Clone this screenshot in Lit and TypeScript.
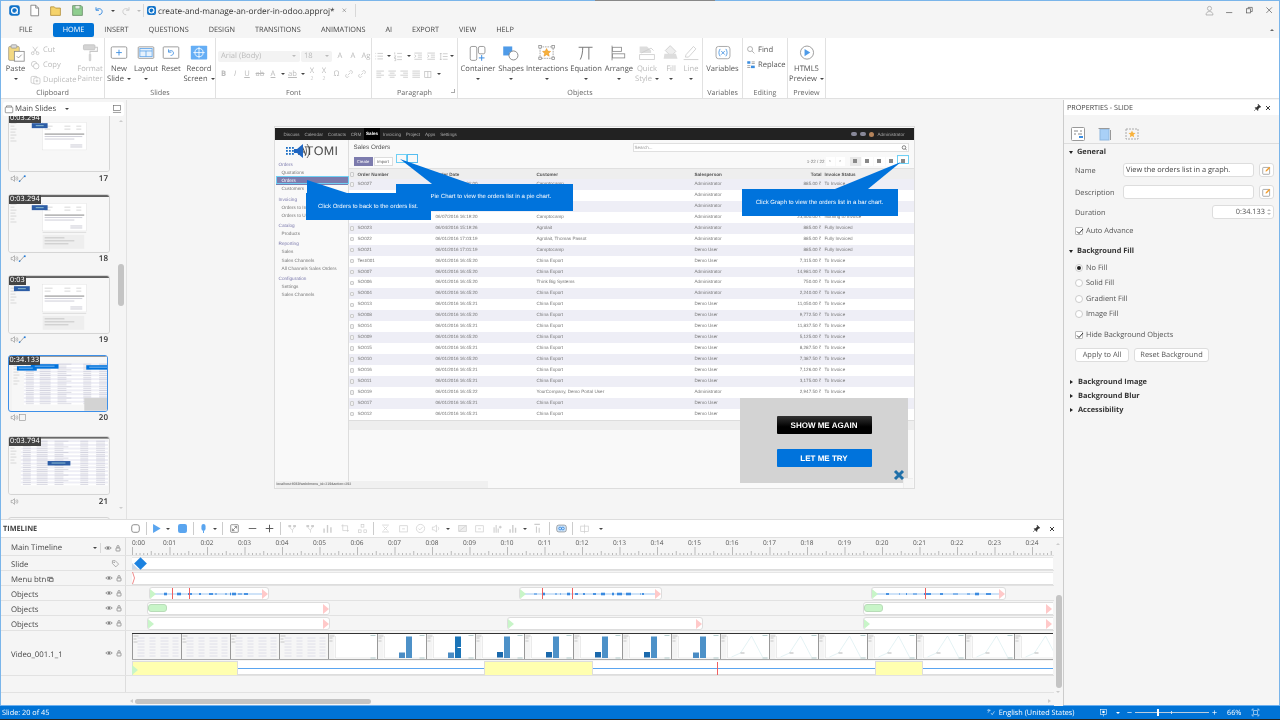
import { LitElement, html, css, svg } from 'lit';
import { customElement } from 'lit/decorators.js';

const S = (p: any, w = 16, h = w, vb = '0 0 16 16') => html`<svg width=${w} height=${h} viewBox=${vb} fill="none" style="display:block;flex:none">${p}</svg>`;

const ic: Record<string, any> = {
  app: svg`<rect x="1.5" y="1.5" width="13" height="13" rx="3" fill="#1273c9"/><circle cx="8" cy="8" r="3.6" stroke="#fff" stroke-width="1.6"/><path d="M9.5 9.5l2.4 2.4" stroke="#fff" stroke-width="1.4"/>`,
  doc: svg`<path d="M3.5 1.5h6l3.500 3.500v9.500h-9.500z" fill="#fff" stroke="#777"/><path d="M9.500 1.500v3.500h3.500" stroke="#777"/>`,
  folder: svg`<path d="M2 3.500h4.500l1.500 1.500h6v9h-12z" fill="#f5d36b" stroke="#b28f3a"/>`,
  save: svg`<path d="M2 2h10.500l1.500 1.500v10.500h-12z" fill="#8fce8f" stroke="#6a8f6a"/><rect x="5" y="2" width="6" height="4" fill="#dfe9df" stroke="#6a8f6a" stroke-width=".6"/>`,
  undo: svg`<path d="M4 3v4h4" stroke="#3b8de0" stroke-width="1.300"/><path d="M4.200 6.800c2-3 8-2.500 8 2 0 2.500-2 4.200-4.500 4.200" stroke="#3b8de0" stroke-width="1.300"/>`,
  redo: svg`<path d="M12 3v4h-4" stroke="#ccc" stroke-width="1.300"/><path d="M11.800 6.800c-2-3-8-2.500-8 2 0 2.500 2 4.200 4.500 4.200" stroke="#ccc" stroke-width="1.300"/>`,
  user: svg`<circle cx="8" cy="5" r="3" stroke="#aaa" stroke-width="1.200"/><path d="M3 14.500c0-3.500 2-5 5-5s5 1.500 5 5z" stroke="#aaa" stroke-width="1.200"/>`,
  min: svg`<path d="M3 11h9" stroke="#555" stroke-width="1"/>`,
  rest: svg`<rect x="3.500" y="5.500" width="6" height="6" stroke="#555"/><path d="M6 5V3.500h6v6h-2" stroke="#555"/>`,
  close: svg`<path d="M3.500 3.500l8 8m0-8l-8 8" stroke="#555" stroke-width="1"/>`,
  paste: svg`<rect x="2" y="3" width="13" height="17" rx="1.500" fill="#f3d982" stroke="#a9a08a"/><rect x="5" y="1" width="7" height="4" rx="1" fill="#ddd" stroke="#999"/><rect x="9" y="9" width="12" height="12" fill="#fff" stroke="#888"/><path d="M12 15l2 2 4-4" stroke="#888"/>`,
  cut: svg`<circle cx="4" cy="12" r="2" stroke="#bbb"/><circle cx="11" cy="12" r="2" stroke="#bbb"/><path d="M5 10.500l6-8M10 10.500l-6-8" stroke="#bbb"/>`,
  copy: svg`<circle cx="6" cy="6" r="4" stroke="#bbb"/><circle cx="9" cy="9" r="4" fill="#fff" stroke="#bbb"/>`,
  dup: svg`<rect x="1.500" y="3.500" width="9" height="10" rx="2" stroke="#bbb"/><rect x="5.500" y="5.500" width="9" height="9" rx="2" fill="#fff" stroke="#bbb"/><path d="M10 8v4M8 10h4" stroke="#bbb"/>`,
  roller: svg`<rect x="3" y="1" width="14" height="6" rx="1" fill="#d4d4d4" stroke="#c2c2c2"/><path d="M17 4h3v5h-9v3" stroke="#c8c8c8" stroke-width="1.300"/><rect x="9.500" y="12" width="3" height="9" rx="1" fill="#d4d4d4"/>`,
  newslide: svg`<rect x="1.500" y="3.500" width="19" height="14" rx="1.500" stroke="#8a8a8a"/><path d="M11 7v7M7.500 10.500h7" stroke="#3b8de0" stroke-width="1.100"/>`,
  layout: svg`<rect x="1.500" y="3.500" width="19" height="14" rx="1" stroke="#8a8a8a" fill="#fff"/><rect x="3.500" y="5.500" width="15" height="10" fill="#e6f1fc" stroke="#5ba2e8"/><path d="M3.500 8.500h15M11 8.500v7" stroke="#5ba2e8"/>`,
  reset: svg`<rect x="1.500" y="3.500" width="19" height="14" rx="1" stroke="#8a8a8a"/><path d="M8 6.500v3.500h3.500" stroke="#3b8de0"/><path d="M8 9.500c2-2.500 6-1.500 6 1.500 0 2-1.500 3-3.500 3" stroke="#3b8de0"/>`,
  record: svg`<rect x="1" y="2" width="20" height="17" rx="1" fill="#65aef5"/><circle cx="11" cy="10.500" r="5" stroke="#fff"/><path d="M11 3.500v14M4 10.500h14" stroke="#fff"/>`,
  container: svg`<rect x="1.500" y="3" width="8" height="17" rx="2" stroke="#888"/><rect x="11.500" y="3" width="8" height="9" rx="2" stroke="#888"/><path d="M15.500 13.500v7M12 17h7" stroke="#3b8de0" stroke-width="1.200"/>`,
  shapes: svg`<rect x="1.500" y="3" width="11" height="11" fill="#4f9be8"/><circle cx="14" cy="14" r="5.500" fill="#fff" stroke="#777"/>`,
  inter: svg`<rect x="2.500" y="3.500" width="16" height="14" stroke="#999" stroke-dasharray="2 1"/><rect x="1" y="2" width="3" height="3" fill="#fff" stroke="#777" stroke-width=".8"/><rect x="17" y="2" width="3" height="3" fill="#fff" stroke="#777" stroke-width=".8"/><rect x="1" y="16" width="3" height="3" fill="#fff" stroke="#777" stroke-width=".8"/><rect x="17" y="16" width="3" height="3" fill="#fff" stroke="#777" stroke-width=".8"/><path d="M10.500 5.500l1.500 3.200 3.500.4-2.600 2.300.8 3.500-3.200-1.800-3.200 1.800.8-3.500-2.600-2.300 3.500-.4z" fill="#f8b23c" stroke="#e38e1e" stroke-width=".6"/>`,
  equation: svg`<path d="M2 4h17M7 4c0 6-1 11-3 15M14.500 4v15" stroke="#777" stroke-width="1.200"/>`,
  arrange: svg`<path d="M2.500 2v18" stroke="#888"/><rect x="3" y="4" width="11" height="5" stroke="#888"/><rect x="3" y="12" width="15" height="5" stroke="#888"/>`,
  quick: svg`<path d="M2 3h9l5 5v3H2z" fill="#ddd"/><path d="M4 11l12-6 3 3" stroke="#ccc"/><rect x="2" y="13" width="18" height="6" fill="#fff" stroke="#ccc"/>`,
  fill: svg`<path d="M10 2l7 7-6 6-7-7z" stroke="#ccc" fill="#eee"/><path d="M3 12h14l2 6H2z" fill="#ddd"/>`,
  line: svg`<path d="M5 13L14 3l3 3-9 10H4z" stroke="#ccc"/><path d="M2 19h18" stroke="#ccc"/>`,
  vars: svg`<rect x="2.500" y="3" width="17" height="15" rx="3" stroke="#999"/><path d="M7.500 6c-2 3-2 6 0 9M14.500 6c2 3 2 6 0 9M8.800 8.500l4.400 4.500m0-4.500L8.800 13" stroke="#3b8de0"/>`,
  find: svg`<circle cx="6.500" cy="6.500" r="4" stroke="#888"/><path d="M9.500 9.500l4 4" stroke="#888"/>`,
  replace: svg`<rect x="2" y="2" width="5" height="4" fill="#3b8de0"/><rect x="8" y="9" width="6" height="4" fill="#3b8de0"/><path d="M2 9h5M2 12h5M9 3h5M9 5.500h5" stroke="#777"/>`,
  preview: svg`<circle cx="11" cy="10.500" r="8" stroke="#8a8a8a"/><path d="M8 6l7 4.500L8 15z" fill="#4f9be8"/>`,
  bullets: svg`<path d="M2 3.500h1M2 7.500h1M2 11.500h1M5 3.500h8M5 7.500h8M5 11.500h8" stroke="#bbb"/>`,
  numbers: svg`<path d="M2.500 2v3M2 7h2l-2 3h2M2 11h2v3H2M6 3.500h7M6 8.500h7M6 12.500h7" stroke="#bbb"/>`,
  indent: svg`<path d="M2 3h11M7 6h6M7 9h6M2 12h11M2 5.500l2.500 2-2.500 2" stroke="#bbb"/>`,
  spacing: svg`<path d="M4 3v10M2.500 4.500L4 3l1.500 1.500M2.500 11.500L4 13l1.500-1.500M7 4h7M7 8h7M7 12h7" stroke="#bbb"/>`,
  left: svg`<path d="M2 3h11M2 6h7M2 9h11M2 12h7" stroke="#bbb"/>`,
  center: svg`<path d="M2 3h11M4 6h7M2 9h11M4 12h7" stroke="#bbb"/>`,
  right: svg`<path d="M2 3h11M6 6h7M2 9h11M6 12h7" stroke="#bbb"/>`,
  just: svg`<path d="M2 3h11M2 6h11M2 9h11M2 12h11" stroke="#bbb"/>`,
  cols: svg`<rect x="2.500" y="3.500" width="9" height="9" stroke="#bbb"/><path d="M7 3.500v9" stroke="#bbb"/>`,
  link: svg`<path d="M6 10l4-4M4.500 8L3 9.500a2.500 2.500 0 003.500 3.500L8 11.500M8 4.500L9.500 3A2.500 2.500 0 0113 6.500L11.500 8" stroke="#bbb"/>`,
  pin: svg`<path d="M9 2l5 5-2 .5-3 3-.5 3-5-5 3-.5 3-3zM5 11l-3 3" stroke="#333" fill="#333"/>`,
  x: svg`<path d="M4 4l8 8m0-8l-8 8" stroke="#222" stroke-width="1.800"/>`,
  eye: svg`<path d="M1.500 8C3.500 4.500 12.500 4.500 14.500 8 12.500 11.500 3.500 11.500 1.500 8z" stroke="#666" stroke-width="1.200"/><circle cx="8" cy="8" r="2" fill="#666"/>`,
  lock: svg`<rect x="4" y="8" width="8" height="6" rx="1" stroke="#666" stroke-width="1.200"/><path d="M6 8V5a2 2 0 014 0v3" stroke="#666" stroke-width="1.200"/>`,
  tag: svg`<path d="M2.500 3h5l6 6-5 5-6-6z" stroke="#777"/><circle cx="5.500" cy="6" r="1" fill="#777"/>`,
  speaker: svg`<path d="M2 6h2.500L8 3v10L4.500 10H2z" stroke="#888"/><path d="M10 5.500c1.500 1 1.500 4 0 5M12 4c2.500 2 2.500 6 0 8" stroke="#888"/>`,
  motion: svg`<path d="M3 13L11 4" stroke="#666"/><rect x="1.500" y="11.500" width="2.500" height="2.500" fill="#1c78d8"/><rect x="10.500" y="2.500" width="3" height="3" fill="#1c78d8"/>`,
  sq: svg`<rect x="3" y="3" width="10" height="10" stroke="#888"/>`,
  panel: svg`<rect x="2.500" y="2.500" width="11" height="8" stroke="#666"/><path d="M1.500 13.500h13" stroke="#666"/>`,
  stack: svg`<rect x="2" y="5" width="12" height="9" rx="1" stroke="#666"/><path d="M4 5V3h8v2" stroke="#666"/>`,
  pgen: svg`<rect x="1.500" y="1.500" width="13" height="13" rx="1" fill="#fff" stroke="#999"/><path d="M4 5h4M10 5h2M4 8h2M8 8h4" stroke="#888"/><path d="M9 11h4" stroke="#3b8de0" stroke-width="2"/>`,
  pvid: svg`<rect x="3" y="3" width="9" height="11" fill="#a9d0f7" stroke="#8fb8e0"/><path d="M1.500 2.500h11M13.500 4v10" stroke="#999"/>`,
  pstar: svg`<rect x="2" y="3" width="12" height="10" stroke="#aaa" stroke-dasharray="2 1"/><path d="M8 4.500l1 2.300 2.500.3-1.900 1.700.6 2.500L8 10l-2.200 1.300.6-2.500L4.500 7.100 7 6.800z" fill="#f8b23c"/>`,
  edit: svg`<rect x="2.500" y="3.500" width="10" height="10" rx="1" stroke="#888"/><path d="M6.500 9.500l.5-2 5-5 1.500 1.500-5 5z" fill="#f39c28"/>`,
  tbRect: svg`<rect x="2.500" y="2.500" width="11" height="11" rx="3" stroke="#777" stroke-width="1.200"/>`,
  tbPlay: svg`<path d="M3 1.500l11 6.500-11 6.500z" fill="#5aa5ef"/>`,
  tbStop: svg`<rect x="1.500" y="1.500" width="13" height="13" rx="3" fill="#5aa5ef"/>`,
  tbMic: svg`<rect x="5" y="1.500" width="6" height="10" rx="3" fill="#5aa5ef"/><path d="M8 11.500v3" stroke="#5aa5ef" stroke-width="1.500"/>`,
  tbFit: svg`<rect x="2.500" y="2.500" width="11" height="11" rx="1" stroke="#666"/><path d="M5 11l6-6M8 5h3v3M5 8v3h3" stroke="#666"/>`,
  tbMinus: svg`<path d="M2.500 8h11" stroke="#666" stroke-width="1.400"/>`,
  tbPlus: svg`<path d="M2.500 8h11M8 2.500v11" stroke="#555" stroke-width="1.400"/>`,
  f1: svg`<rect x="2" y="3" width="4" height="3" fill="#ccc"/><rect x="9" y="3" width="4" height="3" fill="#ccc"/><path d="M4 6l3 4M11 6l-3 4v4" stroke="#ccc"/>`,
  f2: svg`<path d="M3 14V8M8 14V3M13 14V6" stroke="#ccc" stroke-width="2"/>`,
  f3: svg`<path d="M4 2v9h9M2 4h9v9" stroke="#ccc"/>`,
  f4: svg`<rect x="6" y="2" width="4" height="4" stroke="#ccc"/><rect x="2" y="10" width="4" height="4" stroke="#ccc"/><rect x="10" y="10" width="4" height="4" stroke="#ccc"/>`,
  f5: svg`<path d="M3 3h10M3 13h10M5 5l3 3 3-3M5 11l3-3 3 3" stroke="#ccc"/>`,
  f6: svg`<rect x="2.500" y="4" width="11" height="9" stroke="#ccc"/><path d="M6 8.500h4" stroke="#ccc"/>`,
  f7: svg`<circle cx="8" cy="8" r="6" stroke="#ccc"/><path d="M5 8l2 2 4-4" stroke="#ccc"/>`,
  f8: svg`<path d="M2 6h2.500L8 3v10L4.500 10H2zM10 5.500c1.500 1 1.500 4 0 5" stroke="#ccc"/>`,
  f9: svg`<rect x="2.500" y="3.500" width="11" height="9" fill="#eee" stroke="#ccc"/><path d="M3 12l10-8" stroke="#ccc"/>`,
  f10: svg`<path d="M3 14V6M6 14V3M9 14V8M12 4v4M10 6h4" stroke="#ccc" stroke-width="1.500"/>`,
  f11: svg`<path d="M3 14V9M7 14V3M11 14V7" stroke="#ccc" stroke-width="2"/>`,
  f12: svg`<path d="M2 2h8M5 5v9M9 7v7" stroke="#ccc" stroke-width="1.500"/>`,
  loop: svg`<rect x="1" y="3" width="14" height="10" rx="3" fill="#cfe4f9" stroke="#888"/><circle cx="6" cy="8" r="2" stroke="#1c78d8"/><circle cx="10" cy="8" r="2" stroke="#1c78d8"/>`,
  f13: svg`<rect x="2.500" y="4.500" width="11" height="8" stroke="#ccc"/><path d="M8 2v13" stroke="#ccc"/>`,
  lang: svg`<path d="M2 4h6M5 2v2M3 8c2-1 3-2 4-4M9 9l2 3 4-6" stroke="#fff"/>`,
  board: svg`<rect x="2.500" y="2.500" width="11" height="9" stroke="#fff"/><rect x="6" y="5" width="4" height="4" fill="#fff"/><path d="M8 11.500V15" stroke="#fff"/>`,
  fit: svg`<path d="M2 5V2h3M11 2h3v3M14 11v3h-3M5 14H2v-3M4.500 4.500h7v7h-7z" stroke="#fff"/>`,
  wminus: svg`<path d="M3 8h10" stroke="#fff" stroke-width="1.500"/>`,
  wplus: svg`<path d="M3 8h10M8 3v10" stroke="#fff" stroke-width="1.500"/>`,
};

type Row = [string, string, string, string, string, string];
const ROWS: Row[] = [
  ['SO027', '06/07/2016 16:21:00', 'Camptocamp', 'Administrator', '885.00 ₹', 'To Invoice'],
  ['', '', '', 'Administrator', '', ''],
  ['', '', '', 'Administrator', '', ''],
  ['', '06/07/2016 16:19:20', 'Camptocamp', 'Administrator', '23,500.00 ₹', 'Nothing to Invoice'],
  ['SO023', '06/04/2016 15:19:26', 'Agrolait', 'Administrator', '885.00 ₹', 'Fully Invoiced'],
  ['SO022', '06/01/2016 17:03:19', 'Agrolait, Thomas Passot', 'Administrator', '885.00 ₹', 'Fully Invoiced'],
  ['SO021', '06/01/2016 17:01:19', 'Camptocamp', 'Demo User', '885.00 ₹', 'Fully Invoiced'],
  ['Test/001', '06/01/2016 16:45:20', 'China Export', 'Demo User', '7,315.00 ₹', 'To Invoice'],
  ['SO007', '06/01/2016 16:45:20', 'China Export', 'Administrator', '14,981.00 ₹', 'To Invoice'],
  ['SO006', '06/01/2016 16:45:20', 'Think Big Systems', 'Administrator', '750.00 ₹', 'To Invoice'],
  ['SO004', '06/01/2016 16:45:20', 'China Export', 'Administrator', '2,240.00 ₹', 'To Invoice'],
  ['SO013', '06/01/2016 16:45:21', 'China Export', 'Demo User', '11,050.00 ₹', 'To Invoice'],
  ['SO008', '06/01/2016 16:45:20', 'China Export', 'Demo User', '9,772.50 ₹', 'To Invoice'],
  ['SO014', '06/01/2016 16:45:21', 'China Export', 'Demo User', '11,837.50 ₹', 'To Invoice'],
  ['SO009', '06/01/2016 16:45:20', 'China Export', 'Demo User', '5,125.00 ₹', 'To Invoice'],
  ['SO015', '06/01/2016 16:45:21', 'China Export', 'Demo User', '8,287.50 ₹', 'To Invoice'],
  ['SO010', '06/01/2016 16:45:20', 'China Export', 'Demo User', '7,387.50 ₹', 'To Invoice'],
  ['SO016', '06/01/2016 16:45:21', 'China Export', 'Demo User', '7,126.00 ₹', 'To Invoice'],
  ['SO011', '06/01/2016 16:45:21', 'China Export', 'Demo User', '3,175.00 ₹', 'To Invoice'],
  ['SO019', '06/01/2016 16:45:22', 'YourCompany, Demo Portal User', 'Administrator', '2,947.50 ₹', 'To Invoice'],
  ['SO017', '06/01/2016 16:45:21', 'China Export', 'Demo User', '', ''],
  ['SO012', '06/01/2016 16:45:21', 'China Export', 'Demo User', '', ''],
];
const NAV: [string, number][] = [
  ['Orders', 0], ['Quotations', 1], ['Orders', 2], ['Customers', 1],
  ['Invoicing', 0], ['Orders to Invoice', 1], ['Orders to Upsell', 1],
  ['Catalog', 0], ['Products', 1],
  ['Reporting', 0], ['Sales', 1], ['Sales Channels', 1], ['All Channels Sales Orders', 1],
  ['Configuration', 0], ['Settings', 1], ['Sales Channels', 1],
];

@customElement('odoo-slide')
class OdooSlide extends LitElement {
  static styles = css`
    :host { display: block; width: 639px; height: 361px; position: relative; flex: none; text-rendering: geometricPrecision;
      font-family: "Liberation Sans", Arial, sans-serif; box-shadow: 0 0 0 1px #ddd; background: #f9f9f9; overflow: hidden; }
    .page { height: 100%; display: flex; flex-direction: column; filter: blur(.2px); }
    .top { height: 12px; margin-top: 1px; background: #222; flex: none; display: flex; align-items: center; padding: 0 9px; gap: 4.800px; color: #a8a8a8; font-size: 4.600px; }
    .top .on { color: #fff; font-weight: bold; background: #000; padding: 0 2px; margin: 0 -2px; line-height: 12px; }
    .top .sp { flex: 1; }
    .admin { color: #aaa; display: flex; align-items: center; gap: 3px; }
    .dot { width: 6px; height: 3.500px; border-radius: 2px; background: #889; }
    .face { width: 5px; height: 5px; border-radius: 50%; background: #b5835a; }
    .body { flex: 1; display: flex; min-height: 0; }
    .side { width: 73px; margin-left: 1px; flex: none; border-right: 1px solid #ddd; box-sizing: border-box; background: #f9f9f9; font-size: 4.700px; color: #777; }
    .logo { height: 17px; position: relative; display: flex; justify-content: flex-end; align-items: center; padding-right: 9px; margin-top: 2px; }
    .logo span { font-size: 12.500px; color: #4c4c4c; letter-spacing: .4px; line-height: 18px; }
    .logo svg { position: absolute; left: 9px; top: 0; }
    .sec { color: #7c7bad; height: 8.200px; line-height: 8.200px; margin-top: 1.900px; padding-left: 3px; }
    .it { height: 8.200px; line-height: 8.200px; padding-left: 6px; }
    .it.on { background: #7c7bad; color: #fff; }
    .main { flex: 1; display: flex; flex-direction: column; min-width: 0; }
    .hdr { height: 28px; box-sizing: border-box; flex: none; display: grid; grid-template-columns: 1fr auto; padding: 3px 5px 0 5px; }
    .ttl { font-size: 6.300px; color: #555; line-height: 9px; }
    .search { width: 276px; height: 9px; background: #fff; border: .5px solid #e0e0e0; box-sizing: border-box; font-size: 4.500px; color: #999; line-height: 8px; padding: 0 1px; display: flex; justify-content: space-between; }
    .btns { display: flex; gap: 1px; margin-top: 2px; }
    .b { width: 19px; height: 9px; font-size: 4.200px; text-align: center; line-height: 9px; }
    .b.p { background: #7c7bad; color: #fff; }
    .b.w { background: #fff; border: .5px solid #ddd; color: #666; box-sizing: border-box; line-height: 8px; }
    .pager { display: flex; justify-content: flex-end; align-items: center; gap: 1px; font-size: 4.500px; color: #777; margin-top: 2px; height: 9px; }
    .pg { width: 9px; height: 9px; background: #fff; text-align: center; line-height: 8px; color: #666; }
    .vw { width: 11px; height: 9px; background: #e8e8e8; display: grid; place-items: center; }
    .vw i { width: 4px; height: 3.500px; background: #888; display: block; }
    .vw.w { background: #fff; }
    .tbl { flex: none; font-size: 4.600px; color: #777; }
    .r { display: grid; grid-template-columns: 9px 78px 101px 158px 95px 32px 91px; height: 10.950px; line-height: 10.950px; white-space: nowrap; }
    .r.h { height: 11px; line-height: 11px; background: #eee; font-weight: bold; color: #555; border-top: .5px solid #e0e0e0; box-sizing: border-box; }
    .r.o { background: #eeeef6; }
    .r.e { background: #fff; }
    .r .n { text-align: right; }
    .r .s { padding-left: 3px; }
    .cb { width: 4.500px; height: 4.500px; border: .5px solid #ccc; border-radius: 1px; margin: 3.300px 0 0 1px; background: #f0f0f0; box-sizing: border-box; }
    .foot { height: 10px; background: #eee; border-top: 1px solid #ddd; box-sizing: border-box; flex: none; }
    .url { position: absolute; left: 1px; bottom: 0; width: 212px; height: 7px; background: #f0f0f0; font-size: 3.600px; line-height: 7px; color: #555; padding-left: 1px; box-sizing: border-box; }
    .art { position: absolute; left: 0; top: 0; pointer-events: none; }
    .call { position: absolute; background: #0073dc; color: #fff; font-size: 6px; display: flex; align-items: center; box-sizing: border-box; white-space: nowrap; }
    .c1 { left: 31px; top: 66px; width: 125px; height: 27px; justify-content: center; padding-top: 1px; }
    .c2 { left: 121px; top: 57px; width: 177px; height: 27px; padding-left: 35px; padding-bottom: 2px; }
    .c3 { left: 467px; top: 62px; width: 156px; height: 27px; justify-content: center; padding-top: 1px; }
    .hl { position: absolute; border: 1px solid #6fd0f5; box-sizing: border-box; }
    .h1 { left: 1px; top: 49px; width: 73px; height: 8px; }
    .h2 { left: 121px; top: 27px; width: 11px; height: 9px; }
    .h3 { left: 132px; top: 27px; width: 11px; height: 9px; border-color: #55bdf0; }
    .h4 { left: 622px; top: 28px; width: 12px; height: 9px; }
    .box { position: absolute; left: 465px; top: 271px; width: 168px; height: 85px; background: #d3d3d3; display: flex; flex-direction: column; align-items: center; padding-top: 18px; gap: 15px; box-sizing: border-box; }
    .cta { width: 95px; height: 18px; color: #fff; font-weight: bold; font-size: 8px; display: grid; place-items: center; border-radius: 1px; margin-left: 1px; }
    .cta.k { background: linear-gradient(#333, #000 60%); }
    .cta.u { background: #0073dc; }
    .xbtn { position: absolute; left: 618px; top: 342px; }
    .grip { position: absolute; left: 628px; top: 351px; width: 9px; height: 9px; border-top: 1px solid #eee; border-left: 1px solid #eee; background: #f6f6f6; }
  `;
  render() {
    return html`
      <div class="page">
        <div class="top">
          ${['Discuss', 'Calendar', 'Contacts', 'CRM'].map((t) => html`<span>${t}</span>`)}
          <span class="on">Sales</span>
          ${['Invoicing', 'Project', 'Apps', 'Settings'].map((t) => html`<span>${t}</span>`)}
          <span class="sp"></span>
          <span class="admin"><i class="dot"></i><i class="dot"></i><i class="face"></i>Administrator</span>
        </div>
        <div class="body">
          <div class="side">
            <div class="logo">
              <span>ATOMI</span>
              ${S(svg`
                ${[0, 3, 6].map((a) => [0, 3, 6].map((b) => svg`<rect x=${a + 1} y=${b + 5} width="1.800" height="1.800" fill="#1d6fc4"/>`))}
                <path d="M9 7h3l6-5v14l-6-5H9z" fill="#1f66c2"/>
                <path d="M20 4c2 2.500 2 7.500 0 10M22 2c3 4 3 10 0 14" stroke="#444" stroke-width=".8"/>
              `, 26, 18, '0 0 26 18')}
            </div>
            ${NAV.map(([t, k]) => k === 0 ? html`<div class="sec">${t}</div>` : html`<div class="it ${k === 2 ? 'on' : ''}">${t}</div>`)}
          </div>
          <div class="main">
            <div class="hdr">
              <div class="ttl">Sales Orders</div>
              <div class="search"><span>Search...</span>${S(svg`<circle cx="3" cy="3" r="1.800" stroke="#555" stroke-width=".7"/><path d="M4.300 4.300l1.500 1.500" stroke="#555" stroke-width=".7"/>`, 6, 7, '0 0 6 6')}</div>
              <div class="btns"><div class="b p">Create</div><div class="b w">Import</div></div>
              <div class="pager"><span>1-22 / 22</span><div class="pg">‹</div><div class="pg">›</div><span style="width:3px"></span>
                ${[0, 1, 2, 3, 4].map((i) => html`<div class="vw ${i ? 'w' : ''}"><i></i></div>`)}</div>
            </div>
            <div class="tbl">
              <div class="r h"><div class="cb"></div><div>Order Number</div><div>Order Date</div><div>Customer</div><div>Salesperson</div><div class="n">Total</div><div class="s">Invoice Status</div></div>
              ${ROWS.map((r, i) => html`<div class="r ${i % 2 ? 'e' : 'o'}"><div class="cb"></div><div>${r[0]}</div><div>${r[1]}</div><div>${r[2]}</div><div>${r[3]}</div><div class="n">${r[4]}</div><div class="s">${r[5]}</div></div>`)}
            </div>
            <div class="foot"></div>
          </div>
        </div>
      </div>
      <div class="url">localhost:8069/web#menu_id=219&amp;action=292</div>
      <div class="hl h1"></div><div class="hl h2"></div><div class="hl h3"></div><div class="hl h4"></div>
      <div class="art">${S(svg`
        <polygon points="32,53 72,66 32,66" fill="#0073dc"/>
        <polygon points="125,32 157,57 196,57" fill="#0073dc"/>
        <polygon points="626,35 560,62 593,62" fill="#0073dc"/>
      `, 639, 361, '0 0 639 361')}</div>
      <div class="call c2">Pie Chart to view the orders list in a pie chart.</div>
      <div class="call c1">Click Orders to back to the orders list.</div>
      <div class="call c3">Click Graph to view the orders list in a bar chart.</div>
      <div class="box"><div class="cta k">SHOW ME AGAIN</div><div class="cta u">LET ME TRY</div></div>
      <div class="grip"></div>
      <div class="xbtn">${S(svg`<path d="M2 2l8 8m0-8l-8 8" stroke="#1f6fa8" stroke-width="3"/>`, 12, 12, '0 0 12 12')}</div>
    `;
  }
}

function tableRows(x0: number, y0: number, n: number) {
  const out = [];
  for (let i = 0; i < n; i++) {
    const y = y0 + i * 1.900;
    out.push(svg`<rect x=${x0} y=${y} width=${100 - x0} height="1.900" fill=${i % 2 ? '#fff' : '#eeeef6'}/>
      <path d="M${x0 + 2} ${y + 1}h8M${x0 + 16} ${y + 1}h11M${x0 + 34} ${y + 1}h${i % 3 ? 9 : 14}M${x0 + 60} ${y + 1}h8M${x0 + 76} ${y + 1}h9" stroke="#b8b8c8" stroke-width=".5"/>`);
  }
  return out;
}
function docThumb(cx: number, cy: number, extra: boolean) {
  return svg`
    <rect width="101" height="57" fill="#f7f7f7"/>
    <rect width="101" height="1.500" fill="#333"/>
    <path d="M1.500 6h5M1.500 9h6M1.500 12h4M1.500 15h6M1.500 18h5M1.500 21h6M1.500 24h4M1.500 27h6" stroke="#c9c9c9" stroke-width=".7"/>
    <rect x="34" y="8" width="44" height="28" fill="#fff" stroke="#ddd" stroke-width=".4"/>
    <path d="M36 12h8M56 12h6M68 12h5M36 15h6M56 15h6M68 15h5" stroke="#bbb" stroke-width=".6"/>
    <path d="M36 20h40" stroke="#666" stroke-width=".8"/><path d="M36 22.500h38M36 25h30M62 31h12M62 33h12" stroke="#aab" stroke-width=".6"/>
    ${extra ? svg`<rect x="34" y="40" width="42" height="14" fill="#eee"/><path d="M36 43h20M36 46h30M36 49h24" stroke="#aaa" stroke-width=".6"/><path d="M34 37.500h44" stroke="#ccc" stroke-width=".6"/>` : ''}
    <rect x=${cx} y=${cy} width="16" height="5" fill="#2d5da6"/>
    <path d="M${cx + 4} ${cy + 2.500}h8" stroke="#cfe" stroke-width=".6"/>
  `;
}
const THUMBS: any[] = [
  { n: 17, t: '0:03.294', a: docThumb(23, 9, false), i: 'motion' },
  { n: 18, t: '0:03.294', a: docThumb(23, 10, true), i: 'motion' },
  { n: 19, t: '0:03', a: docThumb(5, 10, true), i: 'motion' },
  {
    n: 20, t: '0:34.133', sel: true, i: 'sq',
    a: svg`<rect width="101" height="57" fill="#f7f7f7"/><rect width="101" height="1.200" fill="#333"/>
      <path d="M1.500 5h5M1.500 8h6M1.500 11h4M1.500 14h6M1.500 17h5M1.500 20h6M1.500 23h4M1.500 26h6M1.500 29h4" stroke="#c9c9c9" stroke-width=".7"/>
      ${tableRows(12, 8, 22)}
      <rect x="5" y="11" width="20" height="4.500" fill="#0073dc"/><rect x="19" y="9" width="28" height="4.500" fill="#0073dc"/><rect x="75" y="10" width="24" height="4.500" fill="#0073dc"/>
      <path d="M7 13h14M23 11h20M78 12h18" stroke="#cfe5fb" stroke-width=".6"/>
      <rect x="73" y="43" width="27" height="13" fill="#d3d3d3"/>`,
  },
  {
    n: 21, t: '0:03.794', i: '',
    a: svg`<rect width="101" height="57" fill="#f7f7f7"/><rect width="101" height="1.200" fill="#333"/>
      <path d="M1.500 5h5M1.500 8h6M1.500 11h4M1.500 14h6M1.500 17h5M1.500 20h6M1.500 23h4M1.500 26h6" stroke="#c9c9c9" stroke-width=".7"/>
      ${tableRows(12, 3, 24)}<rect x="39" y="24" width="23" height="4.500" fill="#2d5da6"/><path d="M43 26h14" stroke="#cfe" stroke-width=".6"/>`,
  },
];

const FRAME = 49;
function filmstrip() {
  const parts: any[] = [];
  for (let i = 0; i < 19; i++) {
    const x = i * FRAME + 0.5;
    const kind = i < 4 ? 'table' : i === 4 ? 'blank' : i < 12 ? 'bar' : 'line';
    parts.push(svg`<rect x=${x} width=${FRAME} height="27" fill=${kind === 'table' ? '#f6f6f6' : '#fff'}/>`);
    if (kind === 'table') {
      for (let r = 0; r < 7; r++) parts.push(svg`<path d="M${x + 5} ${5 + r * 3}h7M${x + 17} ${5 + r * 3}h6M${x + 28} ${5 + r * 3}h8M${x + 40} ${5 + r * 3}h6" stroke="#dcdce8" stroke-width=".9"/>`);
      parts.push(svg`<path d="M${x + 1} 3h5M${x + 1} 6h3M${x + 1} 9h4" stroke="#aaa" stroke-width=".6"/>`);
    }
    if (kind !== 'table') {
      parts.push(svg`<rect x=${x} width="6" height="27" fill="#f4f4f4"/><path d="M${x + 1} 3h5M${x + 1} 5h3M${x + 1} 8h3" stroke="#aaa" stroke-width=".6"/>
        <path d="M${x + 7} 3v22h41" stroke="#ddd" stroke-width=".6"/><path d="M${x + 42} 2.500h5M${x + 42} 25h5" stroke="#9bb" stroke-width=".7"/>`);
    }
    if (kind === 'bar') {
      const dark = i > 6 && i < 11;
      parts.push(svg`<rect x=${x + 21.500} y=${dark ? 19 : 19.500} width="6" height="5.500" fill=${dark ? '#1b69ac' : '#4a8cc4'}/>
        <rect x=${x + 28.500} y="3.500" width="6" height="21.500" fill=${i === 6 ? '#1b75b8' : '#4d91c8'}/>`);
      if (i === 6) parts.push(svg`<rect x=${x + 31} y="14" width="4" height="1" fill="#fff"/>`);
    }
    if (kind === 'line') {
      parts.push(svg`<polyline points="${x + 11},24 ${x + 20},20 ${x + 31},3 ${x + 42},24" stroke="#d8ecef" stroke-width=".7"/>
        <path d="M${x + 20} 20h4" stroke="#999" stroke-width=".7"/>`);
    }
    parts.push(svg`<path d="M${x} 0v27" stroke="#999"/>`);
  }
  return S(svg`${parts}<path d="M0 .5h921" stroke="#333"/><path d="M0 26.500h921" stroke="#aaa"/>`, 921, 27, '0 0 921 27');
}
function wave(w: number, seed: number) {
  const segs: any[] = [];
  let x = 14;
  let s = seed;
  while (x < w - 16) {
    s = (s * 73 + 41) % 101;
    const len = 1 + (s % 5);
    const h = 1 + (s % 3) * .8;
    segs.push(svg`<rect x=${x} y=${6 - h / 2} width=${len} height=${h} fill="#3a8ae0"/>`);
    x += len + 1 + ((s * 7) % 10);
  }
  return svg`<path d="M5 6H${w - 6}" stroke="#5ea3e8" stroke-width=".6"/>${segs}`;
}
function ruler() {
  const t: any[] = [];
  for (let i = 0; i <= 246; i++) {
    const x = i * 3.750 + 0.5;
    const h = i % 10 === 0 ? 8 : i % 5 === 0 ? 4 : 2;
    t.push(svg`<path d="M${x} 17V${17 - h}" stroke="#aaa" stroke-width=".8"/>`);
  }
  return S(svg`${t}`, 921, 18, '0 0 921 18');
}

// [icon, centre x on the page]
const TOOL: [string, number][] = [
  ['tbRect', 135], ['|', 146.5], ['tbPlay', 156], ['^', 168], ['tbStop', 182], ['|', 193], ['tbMic', 203], ['^', 215], ['|', 222],
  ['tbFit', 234], ['tbMinus', 252], ['tbPlus', 269], ['|', 280], ['f1', 292], ['f1', 310], ['f2', 327], ['f3', 345], ['f4', 362], ['|', 373],
  ['f5', 385], ['f6', 403], ['f7', 420], ['f8', 436], ['^', 448], ['f9', 462], ['f6', 479], ['f10', 497], ['f11', 513], ['^', 525], ['f12', 538], ['|', 549], ['loop', 561], ['|', 572], ['f13', 584], ['^', 601],
];
const toolItems = (() => {
  let right = 129;
  return TOOL.map(([n, c]) => {
    const w = n === '|' ? 1 : n === '^' ? 4 : 11;
    const m = c - w / 2 - right;
    right = c + w / 2;
    return { n, w, m };
  });
})();

@customElement('app-root')
class AppRoot extends LitElement {
  static styles = css`
    :host { display: block; width: 1280px; height: 720px; overflow: hidden; position: relative; font-family: "Open Sans", "Noto Sans", sans-serif; font-size: 8px; color: #444; text-rendering: geometricPrecision; }
    .root { width: 1280px; height: 720px; box-sizing: border-box; background: #f5f5f5; display: flex; flex-direction: column; border-left: 1px solid #7ab5ea; border-right: 1px solid #7ab5ea; filter: blur(.2px); }
    .topline { height: 1px; display: flex; flex: none; margin: 0 -1px; }
    .topline i { background: #7ab5ea; flex: 1; }
    .topline b { background: #888; width: 120px; }
    .title { height: 19px; flex: none; display: flex; align-items: center; padding-left: 5px; }
    .ti { width: 21px; display: grid; place-items: center; flex: none; }
    .car { width: 0; height: 0; border-left: 2px solid transparent; border-right: 2px solid transparent; border-top: 2.500px solid #444; display: inline-block; flex: none; }
    .car.f { border-top-color: #bbb; }
    .vsep { width: 1px; height: 13px; background: #d8d8d8; flex: none; }
    .tname { font-size: 8.300px; color: #333; white-space: nowrap; padding-top: 1px; }
    .sp { flex: 1; }
    .tabs { height: 18px; box-sizing: border-box; padding-top: 2px; flex: none; display: flex; align-items: center; font-size: 7.300px; color: #444; padding-left: 8px; position: relative; }
    .tab { padding: 0 10px; line-height: 14px; white-space: nowrap; }
    .tab.file { margin-right: 10px; }
    .tab.on { background: #0073d6; color: #fff; border-radius: 2px; }
    .collapse { position: absolute; right: 5px; top: 9px; width: 0; height: 0; border-left: 2px solid transparent; border-right: 2px solid transparent; border-bottom: 2px solid #666; }
    .ribbon { height: 61px; flex: none; background: #fff; border-bottom: 1px solid #e0e0e0; box-sizing: border-box; display: flex; margin: 0; }
    .grp { position: relative; flex: none; height: 60px; border-right: 1px solid #e1e1e1; box-sizing: border-box; display: flex; padding-top: 5px; font-size: 7.600px; color: #555; }
    .gl { position: absolute; left: 0; right: 0; top: 50px; text-align: center; font-size: 7.200px; color: #666; line-height: 10px; }
    .big { display: flex; flex-direction: column; align-items: center; flex: none; line-height: 10px; white-space: nowrap; }
    .big .i { height: 19px; margin-bottom: 2px; display: flex; align-items: center; justify-content: center; }
    .big.dis { color: #bbb; }
    .big .l2 { display: flex; align-items: center; gap: 3px; height: 10px; }
    .col { display: flex; flex-direction: column; flex: none; }
    .sm { display: flex; align-items: center; gap: 2px; height: 14.700px; color: #bbb; white-space: nowrap; }
    .sm.act { color: #555; }
    .fr { display: flex; align-items: center; height: 18px; padding-left: 2px; color: #bbb; }
    .sel { height: 11px; background: #f3f3f3; color: #bbb; display: flex; align-items: center; box-sizing: border-box; padding: 0 3px; justify-content: space-between; border-radius: 2px; }
    .cell { width: 12px; text-align: center; flex: none; display: grid; place-items: center; }
    .launcher { position: absolute; right: 2px; top: 51px; width: 3px; height: 3px; border-right: 1px solid #aaa; border-bottom: 1px solid #aaa; }

    .content { flex: 1; display: flex; min-height: 0; margin-top: 1px; }
    .lcol { width: 1062px; flex: none; display: flex; flex-direction: column; }
    .upper { flex: 1; display: flex; min-height: 0; border-bottom: 1px solid #ddd; }
    .slides { width: 126px; flex: none; display: flex; flex-direction: column; border-right: 1px solid #e2e2e2; box-sizing: border-box; position: relative; }
    .shead { height: 14px; margin: 2px 2px 0; flex: none; background: #fff; display: flex; align-items: center; padding: 0 2px 0 1px; gap: 1px; border-radius: 2px; color: #444; font-size: 7.800px; position: relative; z-index: 2; }
    .list { flex: 1; overflow: hidden; padding: 0 0 0 7px; display: flex; flex-direction: column; margin-top: -3px; }
    .titem { height: 80.800px; flex: none; display: flex; flex-direction: column; width: 102px; }
    .thumb { height: 57px; border: 1px solid #d5d5d5; border-radius: 3px; width: 100px; position: relative; overflow: hidden; flex: none; }
    .thumb.sel { border: 1.500px solid #3d8fe8; margin: -.5px; }
    .thumb .t { position: absolute; left: 0; top: 0; background: #444; color: #fff; font-size: 7.300px; line-height: 9px; padding: 0 1px; letter-spacing: .1px; font-family: "Noto Sans", sans-serif; }
    .meta { display: flex; align-items: center; height: 10px; margin-top: 1px; padding: 0 2px; color: #333; font-size: 8px; font-weight: 600; }
    .meta svg { margin-right: -1px; }
    .vbar { position: absolute; right: 2px; top: 16px; bottom: 7px; width: 6px; }
    .vthumb { position: absolute; left: 0; right: 0; top: 148px; height: 42px; background: #c4c4c4; border-radius: 3px; }
    .up { position: absolute; left: 1px; top: 4px; width: 0; height: 0; border-left: 2.500px solid transparent; border-right: 2.500px solid transparent; border-bottom: 2.500px solid #ccc; }
    .down { position: absolute; left: 1px; bottom: 3px; width: 0; height: 0; border-left: 2.500px solid transparent; border-right: 2.500px solid transparent; border-top: 2.500px solid #ccc; }
    .canvas { flex: 1; display: flex; justify-content: center; padding: 27px 2px 0 0; background: #f5f5f5; }

    .props { width: 216px; flex: none; border-left: 1px solid #ccc; box-sizing: border-box; display: flex; flex-direction: column; font-size: 7.400px; color: #555; }
    .phead { height: 15px; background: #fff; display: flex; align-items: center; padding: 0 3px; font-size: 7.200px; color: #444; gap: 2px; flex: none; }
    .ptabs { height: 27px; box-sizing: content-box; border-bottom: 1px solid #ddd; display: flex; align-items: flex-end; gap: 11px; padding: 0 0 1px 6px; flex: none; }
    .psec { display: flex; align-items: center; gap: 3px; font-weight: 700; color: #333; padding-left: 5px; height: 14px; }
    .tri { width: 0; height: 0; border-left: 2.500px solid transparent; border-right: 2.500px solid transparent; border-top: 3px solid #222; margin-right: 1px; }
    .tri.r { border-top: 2.500px solid transparent; border-bottom: 2.500px solid transparent; border-left: 3px solid #222; border-right: 0; margin: 0 2px 0 1px; }
    .prow { display: flex; align-items: center; padding-left: 11px; }
    .prow .lab { width: 48px; flex: none; padding-top: 2px; }
    .inp { width: 131px; height: 14px; background: #fff; border: 1px solid #ddd; border-radius: 3px; box-sizing: border-box; color: #444; padding: 0 2px; line-height: 13px; }
    .ebtn { width: 15px; height: 14px; margin-left: 5px; background: #fff; border: 1px solid #ddd; border-radius: 3px; box-sizing: border-box; display: grid; place-items: center; }
    .spin { margin-left: auto; margin-right: 5px; width: 62px; height: 14px; background: #fff; border: 1px solid #ddd; border-radius: 3px; box-sizing: border-box; display: flex; justify-content: flex-end; align-items: center; gap: 2px; padding-right: 2px; color: #555; }
    .spin .a { display: flex; flex-direction: column; gap: 2px; }
    .chk { width: 8px; height: 8px; background: #fff; border: 1px solid #bbb; border-radius: 1px; box-sizing: border-box; margin-right: 3px; position: relative; display: grid; place-items: center; flex: none; }
    .rad { width: 8px; height: 8px; background: #fff; border: 1px solid #ccc; border-radius: 50%; box-sizing: border-box; margin-right: 3px; display: grid; place-items: center; flex: none; }
    .rad i { width: 4px; height: 4px; background: #222; border-radius: 50%; }
    .pbtn { height: 14px; background: #fff; border: 1px solid #ddd; border-radius: 3px; box-sizing: border-box; display: grid; place-items: center; color: #555; }

    .tl { height: 186px; flex: none; display: flex; flex-direction: column; position: relative; }
    .thead { height: 18px; background: #fff; display: flex; align-items: center; flex: none; border-bottom: 1px solid #e0e0e0; box-sizing: border-box; }
    .thead .name { width: 128px; flex: none; font-weight: 700; font-size: 7.300px; color: #444; padding: 1px 0 0 2px; box-sizing: border-box; }
    .tool { display: grid; place-items: center; flex: none; height: 17px; }
    .tool .vb { width: 1px; height: 13px; background: #ccc; }
    .row { display: flex; flex: none; border-bottom: 1px solid #e2e2e2; box-sizing: border-box; }
    .lbl { width: 125px; flex: none; border-right: 1px solid #ddd; box-sizing: border-box; display: flex; align-items: center; padding: 3px 0 0 10px; color: #444; font-size: 7.800px; white-space: nowrap; }
    .lbl .ics { margin-left: auto; display: flex; gap: 2px; padding-right: 2px; align-items: center; margin-top: -3px; }
    .gap { width: 6px; flex: none; }
    .track { width: 921px; flex: none; position: relative; overflow: hidden; }
    .rlab { position: absolute; top: 0; font-size: 6.500px; transform: translateX(-50%); color: #555; line-height: 10px; }
    .rlab.first { transform: none; }
    .ticks { position: absolute; left: 0; top: 0; }
    .clip { position: absolute; background: #fff; border: 1px solid #ddd; box-sizing: border-box; border-radius: 3px; overflow: hidden; }
    .tg { position: absolute; left: 0; top: 50%; margin-top: -5px; border-top: 5px solid transparent; border-bottom: 5px solid transparent; border-left: 6px solid #c8f5c8; }
    .tp { position: absolute; right: 0; top: 50%; margin-top: -5px; border-top: 5px solid transparent; border-bottom: 5px solid transparent; border-left: 6px solid #ffc9c9; }
    .pill { position: absolute; background: #c8f5c8; border: 1px solid #b8dcb8; border-radius: 3px; height: 8px; box-sizing: border-box; top: 1px; left: 0; width: 19px; }
    .mark { position: absolute; width: 1px; background: #f06060; top: 0; bottom: 0; }
    .full { position: absolute; left: 0; right: 0; background: #fff; border-bottom: 1px solid #ddd; border-top: 1px solid #e6e6e6; box-sizing: border-box; }
    .dia { position: absolute; left: 3.500px; top: 3px; width: 9px; height: 9px; background: #1c82e0; transform: rotate(45deg); }
    .corner { position: absolute; left: 0; top: 7px; width: 0; height: 0; border-left: 6px solid #cdd9e8; border-top: 6px solid transparent; }
    .yel { position: absolute; background: #ffffb0; border: 1px solid #ddd; box-sizing: border-box; top: 0; height: 15px; }
    .vline { position: absolute; left: 0; right: 0; top: 7px; height: 1px; background: #5aa5f0; }
    .hs { flex: 1; position: relative; }
    .hs .th { position: absolute; left: 134px; top: 6px; height: 5px; width: 236px; background: #c4c4c4; border-radius: 3px; }
    .al { position: absolute; left: 129px; top: 6px; border-top: 2.500px solid transparent; border-bottom: 2.500px solid transparent; border-right: 3px solid #ccc; }
    .ar { position: absolute; left: 1047px; top: 6px; border-top: 2.500px solid transparent; border-bottom: 2.500px solid transparent; border-left: 3px solid #ccc; }
    .tlscroll { position: absolute; right: 0; top: 18px; bottom: 0; width: 9px; background: #f5f5f5; }
    .tlscroll .th { position: absolute; left: 2px; right: 1px; top: 57px; height: 93px; background: #c4c4c4; border-radius: 3px; }
    .tlscroll .up { left: 2px; top: 5px; } .tlscroll .down { left: 2px; top: 153px; bottom: auto; }

    .status { height: 14px; flex: none; background: #0073d6; color: #fff; font-size: 7.300px; display: flex; align-items: center; padding-left: 2px; margin: 0 -1px; box-shadow: 0 -1px 0 #6cb0f0; box-sizing: border-box; border-bottom: 1px solid #222; }
    .slider { width: 74px; height: 1px; background: #bcd; position: relative; margin: 0 2px; }
    .slider i { position: absolute; left: 22px; top: -3px; width: 2px; height: 7px; background: #fff; }
    .slider b { position: absolute; left: 36px; top: -1px; width: 1px; height: 3px; background: #cde; }
  `;

  big(l1: string, l2: string, icon: string, w: number, opt: { car?: boolean; dis?: boolean } = {}) {
    const hasL2 = l2 || opt.car;
    return html`<div class="big ${opt.dis ? 'dis' : ''}" style="width:${w}px">
      <div class="i">${S(ic[icon], 18, 18, '0 0 22 22')}</div>
      <div>${l1}</div>
      ${hasL2 ? html`<div class="l2">${l2}${opt.car ? html`<i class="car"></i>` : ''}</div>` : ''}
    </div>`;
  }
  fcell(content: any, w = 12) {
    return html`<div class="cell" style="width:${w}px">${content}</div>`;
  }
  tlIcons() { return html`<span class="ics">${S(ic.eye, 8, 8)}${S(ic.lock, 8, 8)}</span>`; }

  render() {
    const TABS = ['INSERT', 'QUESTIONS', 'DESIGN', 'TRANSITIONS', 'ANIMATIONS', 'AI', 'EXPORT', 'VIEW', 'HELP'];
    const car = html`<i class="car"></i>`;
    const fcar = html`<i class="car f"></i>`;
    return html`<div class="root">
      <div class="topline"><i style="flex:0 0 595px"></i><b></b><i></i></div>
      <div class="title">
        <div class="ti" style="width:17px">${S(ic.app, 13, 13)}</div>
        <div class="ti" style="width:22px">${S(ic.doc, 13, 13)}</div>
        <div class="ti">${S(ic.folder, 13, 13)}</div>
        <div class="ti" style="width:22px">${S(ic.save, 13, 13)}</div>
        <div class="ti" style="width:22px">${S(ic.undo, 12, 12)}</div>
        <div class="ti" style="width:5px">${car}</div>
        <div class="ti" style="width:21px">${S(ic.redo, 12, 12)}</div>
        <div class="ti" style="width:5px">${fcar}</div>
        <div class="ti" style="width:2px"></div>
        <div class="vsep"></div>
        <div class="ti" style="width:13px;margin-left:1px">${S(ic.app, 11, 11)}</div>
        <span class="tname">create-and-manage-an-order-in-odoo.approj*</span>
        <div class="ti" style="width:20px">${S(ic.close, 7, 7)}</div>
        <div class="vsep"></div>
        <div class="sp"></div>
        <div class="ti" style="width:20px">${S(ic.user, 11, 11)}</div>
        <div class="ti" style="width:20px">${S(ic.min, 11, 11)}</div>
        <div class="ti" style="width:20px">${S(ic.rest, 11, 11)}</div>
        <div class="ti" style="width:20px">${S(ic.close, 11, 11)}</div>
      </div>
      <div class="tabs">
        <div class="tab file">FILE</div><div class="tab on">HOME</div>
        ${TABS.map((t) => html`<div class="tab">${t}</div>`)}
        <i class="collapse"></i>
      </div>
      <div class="ribbon">
        <div class="grp" style="width:104px">
          ${this.big('Paste', '', 'paste', 29, { car: true })}
          <div class="col" style="width:46px">
            <div class="sm">${S(ic.cut, 11, 11)}Cut</div>
            <div class="sm">${S(ic.copy, 11, 11)}Copy</div>
            <div class="sm">${S(ic.dup, 11, 11)}Duplicate</div>
          </div>
          ${this.big('Format', 'Painter', 'roller', 28, { dis: true })}
          <div class="gl">Clipboard</div>
        </div>
        <div class="grp" style="width:111px">
          ${this.big('New', 'Slide', 'newslide', 28, { car: true })}
          ${this.big('Layout', '', 'layout', 26, { car: true })}
          ${this.big('Reset', '', 'reset', 24)}
          ${this.big('Record', 'Screen', 'record', 32, { car: true })}
          <div class="gl">Slides</div>
        </div>
        <div class="grp" style="width:156px;padding-left:2px">
          <div class="col">
            <div class="fr" style="margin-top:4px;padding:0">
              <div class="sel" style="width:82px"><span>Arial (Body)</span><span class="car f" style="margin-right:1px"></span></div>
              <div class="sel" style="width:31px;margin-left:1px;margin-right:1px"><span>18</span><span class="car f"></span></div>
              ${this.fcell('A', 14)}${this.fcell('A', 12)}${this.fcell('Ag', 14)}
            </div>
            <div class="fr" style="padding:0;margin-left:0">
              ${this.fcell(html`<b>B</b>`, 11)}${this.fcell(html`<i>I</i>`)}${this.fcell(html`<u>U</u>`)}${this.fcell(html`<s>ab</s>`, 14)}
              ${this.fcell(html`<u>A</u>`, 12)}${this.fcell(car, 7)}${this.fcell(html`<u>ab</u>`, 13)}${this.fcell(car, 7)}
              ${this.fcell(html`X<sub style="font-size:5px">2</sub>`)}${this.fcell(html`X<sup style="font-size:5px">2</sup>`)}${this.fcell('Ω', 13)}${this.fcell(S(ic.link, 10, 10))}${this.fcell(S(ic.link, 10, 10), 14)}
            </div>
          </div>
          <div class="gl">Font</div>
        </div>
        <div class="grp" style="width:86px;padding-left:2px">
          <div class="col">
            <div class="fr" style="margin-top:4px;padding:0">
              ${this.fcell(S(ic.bullets, 11, 11), 11)}${this.fcell(car, 7)}${this.fcell(S(ic.numbers, 11, 11), 13)}${this.fcell(car, 7)}${this.fcell(S(ic.indent, 11, 11), 13)}${this.fcell(S(ic.indent, 11, 11), 13)}${this.fcell(S(ic.spacing, 11, 11), 11)}${this.fcell(car, 5)}
            </div>
            <div class="fr" style="padding:0">
              ${this.fcell(S(ic.left, 11, 11))}${this.fcell(S(ic.center, 11, 11))}${this.fcell(S(ic.right, 11, 11))}${this.fcell(S(ic.just, 11, 11))}${this.fcell(S(ic.cols, 11, 11), 13)}${this.fcell(car, 7)}
            </div>
          </div>
          <div class="gl">Paragraph</div><i class="launcher"></i>
        </div>
        <div class="grp" style="width:245px;padding-left:3px">
          ${this.big('Container', '', 'container', 34, { car: true })}
          ${this.big('Shapes', '', 'shapes', 32, { car: true })}
          ${this.big('Interactions', '', 'inter', 40, { car: true })}
          ${this.big('Equation', '', 'equation', 38, { car: true })}
          ${this.big('Arrange', '', 'arrange', 28, { car: true })}
          ${this.big('Quick', 'Style', 'quick', 28, { car: true, dis: true })}
          ${this.big('Fill', '', 'fill', 20, { car: true, dis: true })}
          ${this.big('Line', '', 'line', 20, { car: true, dis: true })}
          <div class="gl">Objects</div>
        </div>
        <div class="grp" style="width:40px">
          ${this.big('Variables', '', 'vars', 39)}
          <div class="gl">Variables</div>
        </div>
        <div class="grp" style="width:45px;padding-left:3px">
          <div class="col">
            <div class="sm act">${S(ic.find, 10, 10)}Find</div>
            <div class="sm act">${S(ic.replace, 10, 10)}Replace</div>
          </div>
          <div class="gl">Editing</div>
        </div>
        <div class="grp" style="width:38px">
          ${this.big('HTML5', 'Preview', 'preview', 37, { car: true })}
          <div class="gl">Preview</div>
        </div>
        <div class="sp" style="background:#fff"></div>
      </div>

      <div class="content">
        <div class="lcol">
          <div class="upper">
            <div class="slides">
              <div class="shead">${S(ic.stack, 10, 10)}<span>Main Slides</span><span style="width:7px"></span>${car}<span class="sp"></span>${S(ic.panel, 10, 10)}</div>
              <div class="list">
                ${THUMBS.map((t) => html`<div class="titem">
                  <div class="thumb ${t.sel ? 'sel' : ''}">${S(t.a, 100, 57, '0 0 101 57')}<span class="t">${t.t}</span></div>
                  <div class="meta">${S(ic.speaker, 9, 9)}${t.i ? S(ic[t.i], 9, 9) : ''}<span class="sp"></span>${t.n}</div>
                </div>`)}
                <div class="thumb"></div>
              </div>
              <div class="vbar"><i class="up"></i><i class="vthumb"></i><i class="down"></i></div>
            </div>
            <div class="canvas"><odoo-slide></odoo-slide></div>
          </div>

          <div class="tl">
            <div class="thead">
              <div class="name">TIMELINE</div>
              ${toolItems.map((t) => html`<div class="tool" style="width:${t.w}px;margin-left:${t.m}px">
                ${t.n === '|' ? html`<div class="vb"></div>` : t.n === '^' ? car : S(ic[t.n], 11, 11)}
              </div>`)}
              <span class="sp"></span>
              <div class="tool" style="width:16px">${S(ic.pin, 9, 9)}</div>
              <div class="tool" style="width:16px">${S(ic.x, 8, 8)}</div>
              <span style="width:3px"></span>
            </div>
            <div class="row" style="height:18px">
              <div class="lbl"><span>Main Timeline</span><span class="sp"></span><i class="car"></i><span class="vsep" style="margin:0 3px;height:10px"></span>${S(ic.eye, 8, 8)}<span style="width:2px"></span>${S(ic.lock, 8, 8)}<span style="width:3px"></span></div>
              <div class="gap"></div>
              <div class="track">
                <div class="ticks">${ruler()}</div>
                ${Array.from({ length: 25 }, (_, i) => html`<span class="rlab ${i ? '' : 'first'}" style="left:${i * 37.5}px">0:${String(i).padStart(2, '0')}</span>`)}
              </div>
            </div>
            <div class="row" style="height:15px"><div class="lbl"><span>Slide</span><span class="ics">${S(ic.tag, 9, 9)}<span style="width:1px"></span></span></div><div class="gap"></div>
              <div class="track"><div class="full" style="top:1px;height:13px"></div><i class="corner"></i><i class="dia"></i></div></div>
            <div class="row" style="height:15px"><div class="lbl"><span>Menu btn</span>${S(svg`<rect x="1.500" y="1.500" width="5" height="4" stroke="#666" fill="#fff"/><rect x="3.500" y="3" width="4" height="3" stroke="#666" fill="#fff"/>`, 8, 7, '0 0 8 8')}${this.tlIcons()}</div><div class="gap"></div>
              <div class="track"><div class="full" style="top:1px;height:13px"></div><div style="position:relative">${S(svg`<path d="M.5 0l2 6-2 6" stroke="#f08a8a"/>`, 4, 14, '0 0 4 12')}</div></div></div>
            <div class="row" style="height:15px"><div class="lbl">Objects${this.tlIcons()}</div><div class="gap"></div>
              <div class="track">
                ${[[17, 120, [22, 39]], [387, 143, [22, 52]], [739, 135, [53]]].map(([l, w, ms]: any, i) => html`
                  <div class="clip" style="left:${l}px;width:${w}px;top:1px;height:13px">
                    <div style="position:absolute;left:0;top:0">${S(wave(w, 7 + i * 11), w, 12, `0 0 ${w} 12`)}</div>
                    <i class="tg"></i><i class="tp"></i>${ms.map((m: number) => html`<i class="mark" style="left:${m}px"></i>`)}
                  </div>`)}
              </div></div>
            <div class="row" style="height:15px"><div class="lbl">Objects${this.tlIcons()}</div><div class="gap"></div>
              <div class="track">
                <div class="clip" style="left:15px;width:183px;top:1px;height:13px"><i class="pill"></i><i class="tp"></i></div>
                <div class="clip" style="left:731px;width:200px;top:1px;height:13px"><i class="pill"></i><i class="tp" style="right:10px"></i></div>
              </div></div>
            <div class="row" style="height:15px"><div class="lbl">Objects${this.tlIcons()}</div><div class="gap"></div>
              <div class="track">
                <div class="clip" style="left:15px;width:183px;top:1px;height:13px"><i class="tg"></i><i class="tp"></i></div>
                <div class="clip" style="left:375px;width:196px;top:1px;height:13px"><i class="tg"></i><i class="tp"></i></div>
                <div class="clip" style="left:731px;width:200px;top:1px;height:13px"><i class="tg"></i><i class="tp" style="right:10px"></i></div>
              </div></div>
            <div class="row" style="height:45px"><div class="lbl">Video_001.1_1${this.tlIcons()}</div><div class="gap"></div>
              <div class="track">
                <div style="margin-top:2px">${filmstrip()}</div>
                <div class="full" style="top:30px;height:14px;border-top:0"></div>
                <div style="position:absolute;left:0;right:0;top:30px;height:15px">
                  <div class="vline"></div>
                  ${[[0, 106], [352, 109], [743, 48]].map(([l, w]) => html`<div class="yel" style="left:${l}px;width:${w}px"></div>`)}
                  <i class="tg" style="margin-top:-4px"></i>
                  <i class="mark" style="left:585px;top:1px;bottom:1px"></i>
                </div>
              </div></div>
            <div class="row" style="height:17px"><div class="lbl"></div></div>
            <div class="hs"><i class="al"></i><i class="th"></i><i class="ar"></i></div>
            <div class="tlscroll"><i class="up"></i><i class="th"></i><i class="down"></i></div>
          </div>
        </div>

        <div class="props">
          <div class="phead"><span>PROPERTIES - SLIDE</span><span class="sp"></span>${S(ic.pin, 9, 9)}${S(ic.x, 8, 8)}<span style="width:2px"></span></div>
          <div class="ptabs">
            ${S(ic.pgen, 16, 16)}${S(ic.pvid, 16, 16)}${S(ic.pstar, 16, 16)}
          </div>
          <div class="psec" style="margin-top:1px"><i class="tri"></i>General</div>
          <div class="prow" style="margin-top:4px"><span class="lab">Name</span><div class="inp">View the orders list in a graph.</div><div class="ebtn">${S(ic.edit, 11, 11)}</div></div>
          <div class="prow" style="margin-top:8px"><span class="lab">Description</span><div class="inp"></div><div class="ebtn">${S(ic.edit, 11, 11)}</div></div>
          <div class="prow" style="margin-top:6px"><span class="lab">Duration</span><div class="spin"><span>0:34.133</span><span class="a"><i class="car f" style="transform:rotate(180deg)"></i><i class="car f"></i></span></div></div>
          <div class="prow" style="margin-top:5px;height:14px"><span class="chk">${S(svg`<path d="M1 3.500l2 2 4-4.500" stroke="#333"/>`, 8, 7, '0 0 8 7')}</span>Auto Advance</div>
          <div class="psec" style="margin-top:6px"><i class="tri"></i>Background Fill</div>
          <div class="prow" style="margin-top:2px;height:15.500px"><span class="rad"><i></i></span>No Fill</div>
          <div class="prow" style="height:15.500px"><span class="rad"></span>Solid Fill</div>
          <div class="prow" style="height:15.500px"><span class="rad"></span>Gradient Fill</div>
          <div class="prow" style="height:15.500px"><span class="rad"></span>Image Fill</div>
          <div class="prow" style="margin-top:6px;height:14px"><span class="chk">${S(svg`<path d="M1 3.500l2 2 4-4.500" stroke="#333"/>`, 8, 7, '0 0 8 7')}</span>Hide Background Objects</div>
          <div class="prow" style="margin-top:6px;gap:5px"><div class="pbtn" style="width:54px">Apply to All</div><div class="pbtn" style="width:75px">Reset Background</div></div>
          <div class="psec" style="margin-top:13px"><i class="tri r"></i>Background Image</div>
          <div class="psec"><i class="tri r"></i>Background Blur</div>
          <div class="psec"><i class="tri r"></i>Accessibility</div>
        </div>
      </div>

      <div class="status">
        <span>Slide: 20 of 45</span><span class="sp"></span>
        ${S(ic.lang, 9, 9)}<span style="margin-left:4px">English (United States)</span>
        <span style="width:24.500px"></span>${S(ic.board, 9, 9)}<span style="width:7.500px"></span><i class="car" style="border-top-color:#fff"></i>
        <span style="width:6px"></span>${S(ic.wminus, 7, 7)}<div class="slider"><i></i><b></b></div>${S(ic.wplus, 7, 7)}
        <span style="margin-left:9.500px;width:18px">66%</span>
        <span style="width:5.500px"></span>${S(ic.fit, 9, 9)}<span style="width:20.500px"></span>
      </div>
    </div>`;
  }
}
